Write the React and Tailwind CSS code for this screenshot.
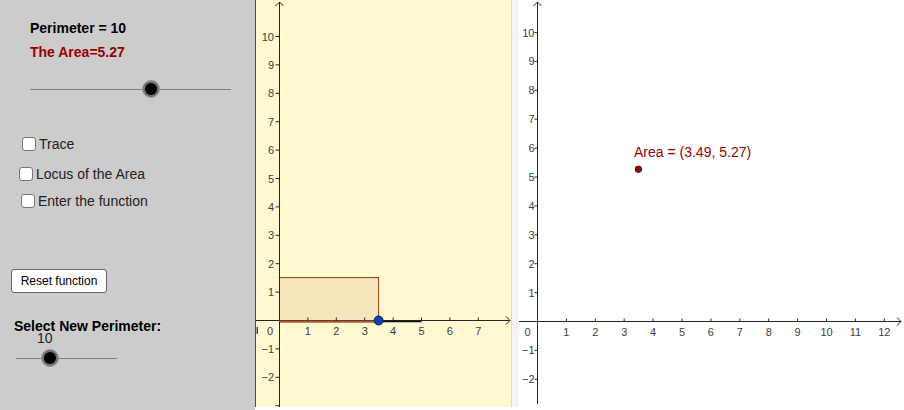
import React from 'react';

const font = { fontFamily: '"Liberation Sans", Arial, sans-serif' };

const Knob = ({ left }) => (
  <div
    className="absolute top-[1px] w-[18px] h-[18px] rounded-full bg-[#707070] border border-[#9a9a9a] flex items-center justify-center"
    style={{ left }}
  >
    <div className="w-[12px] h-[12px] rounded-full bg-black" />
  </div>
);

const Slider = ({ className, knob }) => (
  <div className={`relative h-[20px] ${className}`}>
    <div className="absolute left-0 right-0 top-[10px] h-px bg-[#808080]" />
    <Knob left={knob} />
  </div>
);

const Check = ({ label, className }) => (
  <label className={`flex items-center gap-[3px] h-[14px] ${className}`}>
    <span className="w-[14px] h-[14px] rounded-[3px] border border-[#777] bg-white shrink-0" />
    <span className="text-[14px] leading-4 text-[#222]">{label}</span>
  </label>
);

const Sidebar = () => (
  <div className="w-[255px] h-[410px] bg-[#cccccc] flex flex-col shrink-0">
    <div className="pt-[20px] pl-[30px] text-[14px] leading-4 font-bold">
      <p className="text-black">Perimeter = 10</p>
      <p className="mt-2 text-[#990000]">The Area=5.27</p>
    </div>
    <Slider className="mt-[19px] ml-[30px] w-[201px]" knob={112} />
    <Check label="Trace" className="mt-[38px] ml-[22px]" />
    <Check label="Locus of the Area" className="mt-[16px] ml-[19px]" />
    <Check label="Enter the function" className="mt-[13px] ml-[21px]" />
    <button className="mt-[61px] ml-[11px] w-[96px] h-[24px] bg-white border border-[#666] rounded-[3px] text-[12px] text-black">
      Reset function
    </button>
    <p className="mt-[25px] ml-[14px] text-[14px] leading-4 font-bold text-black">Select New Perimeter:</p>
    <p className="-mt-[4px] ml-[37px] text-[14px] leading-4 text-[#222]">10</p>
    <Slider className="mt-[2px] ml-[16px] w-[101px]" knob={25} />
  </div>
);

const axis = '#252525';
const lbl = '#404040';

// left graphics view (yellow)
const AreaView = () => {
  const ox = 23.5, oy = 320.5, u = 28.4;
  const w = 3.49 * u, h = 1.51 * u;
  const xs = [1, 2, 3, 4, 5, 6, 7];
  const ys = [-3, -2, -1, 1, 2, 3, 4, 5, 6, 7, 8, 9, 10];
  return (
    <svg width="255" height="407" className="block" style={font}>
      <rect x={ox} y={oy - h} width={w} height={h} fill="#f5e6bc" stroke="#993300" strokeWidth="1" />
      <line x1={ox} y1="2" x2={ox} y2="407" stroke={axis} strokeWidth="1" />
      <polyline points={`${ox - 4},6 ${ox},2 ${ox + 4},6`} fill="none" stroke={axis} />
      <line x1="0" y1={oy} x2="254" y2={oy} stroke={axis} strokeWidth="1" />
      <polyline points={`250,${oy - 4} 254,${oy} 250,${oy + 4}`} fill="none" stroke={axis} />
      <line x1={ox} y1={oy + 1} x2={ox + 5 * u} y2={oy + 1} stroke="#111" strokeWidth="1.5" />
      <line x1={ox} y1={oy + 1} x2={ox + w} y2={oy + 1} stroke="#b5562a" strokeWidth="2" />
      {xs.map((i) => (
        <g key={i}>
          <line x1={ox + i * u} y1={oy - 3} x2={ox + i * u} y2={oy} stroke={axis} />
          <text x={ox + i * u} y="334.5" fontSize="11" textAnchor="middle" fill={lbl}>{i}</text>
        </g>
      ))}
      {ys.map((j) => (
        <g key={j}>
          <line x1={ox - 4} y1={oy - j * u} x2={ox} y2={oy - j * u} stroke={axis} />
          {j > -3 && (
            <text x="18" y={oy - j * u + 4} fontSize="11" textAnchor="end" fill={lbl}>
              {j < 0 ? `\u2212${-j}` : j}
            </text>
          )}
        </g>
      ))}
      <text x="14" y="334.5" fontSize="11" textAnchor="middle" fill={lbl}>0</text>
      <rect x="0.5" y="327" width="1.5" height="7" fill="#444" />
      <circle cx={ox + w} cy={oy} r="4.5" fill="#1440b0" stroke="#0a1a50" strokeWidth="1" />
    </svg>
  );
};

// right graphics view (locus)
const LocusView = () => {
  const ox = 19.5, oy = 321.5, u = 28.9;
  const xs = [1, 2, 3, 4, 5, 6, 7, 8, 9, 10, 11, 12];
  const ys = [-2, -1, 1, 2, 3, 4, 5, 6, 7, 8, 9, 10];
  return (
    <svg width="386" height="407" className="block" style={font}>
      <line x1={ox} y1="2" x2={ox} y2="404" stroke={axis} />
      <polyline points={`${ox - 4},6 ${ox},2 ${ox + 4},6`} fill="none" stroke={axis} />
      <line x1="1" y1={oy} x2="383" y2={oy} stroke={axis} />
      <polyline points={`379,${oy - 4} 383,${oy} 379,${oy + 4}`} fill="none" stroke={axis} />
      {xs.map((i) => (
        <g key={i}>
          <line x1={ox + i * u} y1={oy - 3} x2={ox + i * u} y2={oy} stroke={axis} />
          <text x={ox + i * u} y="336" fontSize="11" textAnchor="middle" fill={lbl}>{i}</text>
        </g>
      ))}
      {ys.map((j) => (
        <g key={j}>
          <line x1={ox - 3} y1={oy - j * u} x2={ox} y2={oy - j * u} stroke={axis} />
          <text x="16.5" y={oy - j * u + 4} fontSize="11" textAnchor="end" fill={lbl}>
            {j < 0 ? `\u2212${-j}` : j}
          </text>
        </g>
      ))}
      <text x="9.5" y="336" fontSize="11" textAnchor="middle" fill={lbl}>0</text>
      <text x="116" y="157" fontSize="14" fill="#990000">Area = (3.49, 5.27)</text>
      <circle cx={ox + 3.49 * u} cy={oy - 5.27 * u} r="3.2" fill="#990000" stroke="#222" strokeWidth="1" />
    </svg>
  );
};

export default function App() {
  return (
    <div className="w-[904px] h-[410px] bg-white flex overflow-hidden" style={font}>
      <Sidebar />
      <div className="w-[256px] h-[407px] border-l border-[#993300] bg-[#fff9d2] shrink-0">
        <AreaView />
      </div>
      <div className="w-[7px] h-[407px] border-l border-[#d9d9d9] bg-[#f4f4f4] shrink-0" />
      <div className="flex-1 h-[407px] bg-white">
        <LocusView />
      </div>
    </div>
  );
}
